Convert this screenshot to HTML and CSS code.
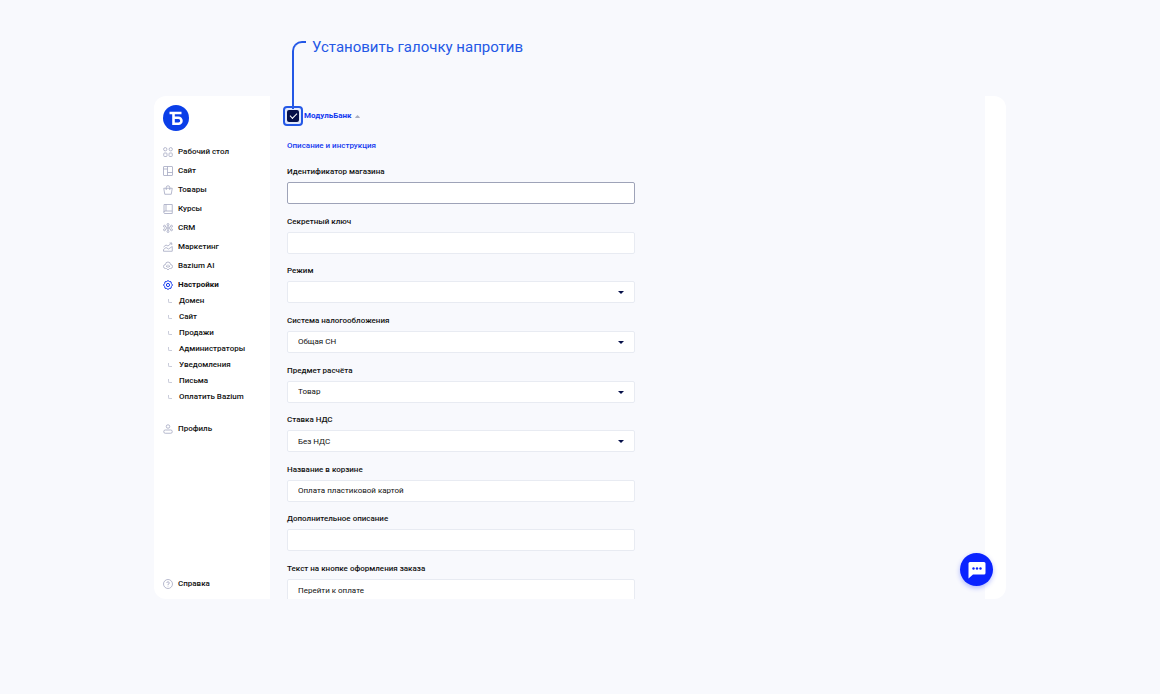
FILE: index.html
```html
<!DOCTYPE html>
<html lang="ru">
<head>
    <meta charset="UTF-8">
    <meta name="viewport" content="width=device-width, initial-scale=1.0">
    <title>Bazium</title>
    <link rel="stylesheet" href="styles.css">
</head>
<body>
    <div class="page">
        <p class="callout">Установить галочку напротив</p>

        <div class="window">
            <aside class="sidebar">
                <a href="#" class="logo" aria-label="Bazium">
                    <svg viewBox="0 0 26 26">
                        <circle cx="13" cy="13" r="13" fill="#0a3ee8"/>
                        <path d="M6.500 8H18.500M10.500 8V18.700H15.500A2.900 2.900 0 0 0 15.500 12.800H10.500" fill="none" stroke="#fff" stroke-width="2.600"/>
                    </svg>
                </a>
                <nav class="menu">
                    <a href="#">
                        <svg viewBox="0 0 20 20"><circle cx="4.500" cy="4.500" r="3.300"/><circle cx="15.500" cy="4.500" r="3.300"/><rect x="1.500" y="12" width="6.500" height="7" rx="1.500"/><rect x="12" y="12" width="6.500" height="7" rx="1.500"/></svg>
                        Рабочий стол
                    </a>
                    <a href="#">
                        <svg viewBox="0 0 20 20"><rect x="1" y="1" width="18" height="18" rx="1"/><path d="M9 1V19M1 6H9M9 13H19"/></svg>
                        Сайт
                    </a>
                    <a href="#">
                        <svg viewBox="0 0 20 20"><path d="M1.500 6.500H18.500L16.500 18.500H3.500ZM6.500 10V5A3.500 3.500 0 0 1 13.500 5V10"/></svg>
                        Товары
                    </a>
                    <a href="#">
                        <svg viewBox="0 0 20 20"><path d="M2 16V1H18.500V19H4A2 2 0 0 1 4 14H18.500M6 1V14"/></svg>
                        Курсы
                    </a>
                    <a href="#">
                        <svg viewBox="0 0 20 20"><circle cx="10" cy="10" r="2"/><circle cx="10" cy="3" r="2"/><circle cx="10" cy="17" r="2"/><circle cx="3" cy="6.500" r="2"/><circle cx="17" cy="6.500" r="2"/><circle cx="3" cy="13.500" r="2"/><circle cx="17" cy="13.500" r="2"/><path d="M10 5V8M10 12V15M5 7.500L8 9M15 7.500L12 9M5 12.500L8 11M15 12.500L12 11"/></svg>
                        CRM
                    </a>
                    <a href="#">
                        <svg viewBox="0 0 20 20"><path d="M1 10L6 6L10 8L17 2M13 2H17.500V6M1 18.500V15L6 11L11 14L18.500 9V18.500Z"/></svg>
                        Маркетинг
                    </a>
                    <a href="#">
                        <svg viewBox="0 0 20 20"><path d="M5 7A5 5 0 0 1 15 7A4 4 0 0 1 15 15H13L10 18L7 15H5A4 4 0 0 1 5 7Z"/><path d="M7 9V12M10 7V14M13 9V12"/></svg>
                        Bazium AI
                    </a>
                    <a href="#" class="active">
                        <svg viewBox="0 0 20 20"><path d="M10 1L12.500 3L16 3.500L16.800 7L19 10L16.800 13L16 16.500L12.500 17L10 19L7.500 17L4 16.500L3.200 13L1 10L3.200 7L4 3.500L7.500 3Z"/><circle cx="10" cy="10" r="3.200"/></svg>
                        Настройки
                    </a>
                </nav>
                <nav class="submenu">
                    <a href="#">Домен</a>
                    <a href="#">Сайт</a>
                    <a href="#">Продажи</a>
                    <a href="#">Администраторы</a>
                    <a href="#">Уведомления</a>
                    <a href="#">Письма</a>
                    <a href="#">Оплатить Bazium</a>
                </nav>
                <nav class="menu profile">
                    <a href="#">
                        <svg viewBox="0 0 20 20"><circle cx="10" cy="5" r="3.500"/><rect x="1.500" y="12" width="17" height="6.500" rx="3"/></svg>
                        Профиль
                    </a>
                </nav>
                <nav class="menu help">
                    <a href="#">
                        <svg viewBox="0 0 20 20"><circle cx="10" cy="10" r="9"/><path d="M7.500 8A2.500 2.500 0 1 1 10 10.500V12M10 13.500V15"/></svg>
                        Справка
                    </a>
                </nav>
            </aside>

            <main class="content">
                <div class="bank">
                    <span class="check-frame">
                        <input type="checkbox" id="bank" checked>
                    </span>
                    <label for="bank">МодульБанк</label>
                    <svg class="caret" viewBox="0 0 6 4"><path d="M0 4V3L3 0L6 3V4Z"/></svg>
                </div>
                <a href="#" class="manual">Описание и инструкция</a>

                <form class="settings">
                    <div class="field">
                        <label for="shop">Идентификатор магазина</label>
                        <input type="text" id="shop" class="current">
                    </div>
                    <div class="field">
                        <label for="secret">Секретный ключ</label>
                        <input type="text" id="secret">
                    </div>
                    <div class="field">
                        <label for="mode">Режим</label>
                        <div class="select">
                            <select id="mode"><option></option></select>
                        </div>
                    </div>
                    <div class="field">
                        <label for="tax">Система налогообложения</label>
                        <div class="select">
                            <select id="tax"><option>Общая СН</option></select>
                        </div>
                    </div>
                    <div class="field">
                        <label for="subject">Предмет расчёта</label>
                        <div class="select">
                            <select id="subject"><option>Товар</option></select>
                        </div>
                    </div>
                    <div class="field">
                        <label for="vat">Ставка НДС</label>
                        <div class="select">
                            <select id="vat"><option>Без НДС</option></select>
                        </div>
                    </div>
                    <div class="field">
                        <label for="name">Название в корзине</label>
                        <input type="text" id="name" value="Оплата пластиковой картой">
                    </div>
                    <div class="field">
                        <label for="about">Дополнительное описание</label>
                        <input type="text" id="about">
                    </div>
                    <div class="field">
                        <label for="button-text">Текст на кнопке оформления заказа</label>
                        <input type="text" id="button-text" value="Перейти к оплате">
                    </div>
                </form>
            </main>

            <div class="edge"></div>

            <button type="button" class="chat" aria-label="Чат">
                <svg viewBox="0 0 18 18">
                    <path d="M2 1H16A1.500 1.500 0 0 1 17.500 2.500V12A1.500 1.500 0 0 1 16 13.500H5L.5 17.500V2.500A1.500 1.500 0 0 1 2 1Z" fill="#fff"/>
                    <circle cx="5.500" cy="7.500" r="1.200"/><circle cx="9" cy="7.500" r="1.200"/><circle cx="12.500" cy="7.500" r="1.200"/>
                </svg>
            </button>
        </div>
    </div>
</body>
</html>
```
FILE: styles.css
```css
* {
    margin: 0;
    padding: 0;
    box-sizing: border-box;
    font-family: "Roboto", "Liberation Sans", sans-serif;
}

body {
    background: #f8f9fd;
    color: #111;
    font-size: 8px;
    line-height: 12px;
}

a {
    color: inherit;
    text-decoration: none;
}

.page {
    max-width: 884px;
    margin: 0 auto;
    padding: 36px 16px 0;
}

/* note with a line that leads down to the checkbox */
.callout {
    position: relative;
    height: 60px;
    padding-left: 158px;
    font-size: 15px;
    line-height: 22px;
    color: #2458e6;
}

.callout::before {
    content: "";
    position: absolute;
    z-index: 1;
    left: 138px;
    top: 5px;
    width: 12px;
    height: 66px;
    border-left: 2px solid #2458e6;
    border-top: 2px solid #2458e6;
    border-top-left-radius: 10px;
}

.window {
    position: relative;
    display: flex;
    height: calc(100vh - 191px);
    border-radius: 12px;
    overflow: hidden;
}

.sidebar {
    display: flex;
    flex-direction: column;
    width: 116px;
    padding: 9px 9px 6px;
    background: #fff;
    font-weight: 500;
}

.logo svg {
    display: block;
    width: 26px;
    height: 26px;
    margin-bottom: 11px;
}

.menu a {
    display: flex;
    align-items: center;
    gap: 5px;
    height: 19px;
}

.menu svg {
    width: 10px;
    height: 10px;
    fill: none;
    stroke: #a4a8c2;
    stroke-width: 1.6;
}

.menu .active {
    font-weight: 700;
}

.menu .active svg {
    stroke: #1238f0;
    stroke-width: 2;
}

.submenu {
    margin-top: -1px;
}

.submenu a {
    display: flex;
    align-items: center;
    gap: 7px;
    height: 16px;
    padding-left: 5px;
}

.submenu a::before {
    content: "";
    width: 3px;
    height: 3px;
    border-left: 1px solid #c9ccda;
    border-bottom: 1px solid #c9ccda;
    border-bottom-left-radius: 2px;
}

.profile {
    margin-top: 14px;
}

.help {
    margin-top: auto;
}

.content {
    flex: 1;
    padding: 10px 16px 0 17px;
}

.bank {
    display: flex;
    align-items: center;
    height: 20px;
    margin-left: -4px;
    color: #1238f0;
    font-weight: 700;
}

.check-frame {
    display: flex;
    align-items: center;
    justify-content: center;
    width: 20px;
    height: 20px;
    margin-right: 1px;
    border: 2px solid #2458e6;
    border-radius: 4px;
    background: #e3eafc;
}

.check-frame input {
    display: flex;
    align-items: center;
    justify-content: center;
    width: 12px;
    height: 12px;
    appearance: none;
    border-radius: 2px;
    background: #06104a;
}

.check-frame input:checked::before {
    content: "";
    width: 6px;
    height: 3px;
    margin-bottom: 2px;
    border-left: 1px solid #fff;
    border-bottom: 1px solid #fff;
    transform: rotate(-45deg);
}

.caret {
    width: 5px;
    height: 3px;
    margin-left: 4px;
    fill: #a9adbf;
}

.manual {
    display: block;
    width: max-content;
    margin-top: 14px;
    color: #1238f0;
    font-weight: 500;
}

/* the last field runs past the bottom of the window */
.settings {
    display: flex;
    flex-direction: column;
    justify-content: space-between;
    max-width: 348px;
    height: 435px;
    margin-top: 14px;
}

.field label {
    display: block;
    margin-bottom: 4px;
    font-weight: 500;
}

.field input,
.field select {
    display: block;
    width: 100%;
    height: 22px;
    padding: 0 10px;
    appearance: none;
    border: 1px solid #e8ebf2;
    border-radius: 2px;
    outline: none;
    background: #fff;
    color: #111;
    font-size: 8px;
}

.field .current {
    border-color: #9ea3b8;
}

.select {
    position: relative;
}

.select::after {
    content: "";
    position: absolute;
    right: 11px;
    top: 10px;
    border: 3px solid transparent;
    border-top-color: #06104a;
    border-bottom: none;
    pointer-events: none;
}

.edge {
    width: 21px;
    background: #fff;
}

.chat {
    position: absolute;
    right: 13px;
    bottom: 13px;
    display: flex;
    align-items: center;
    justify-content: center;
    width: 33px;
    height: 33px;
    border: none;
    border-radius: 50%;
    background: #0a23ff;
    box-shadow: 0 2px 5px rgba(10, 35, 255, 0.3);
    cursor: pointer;
}

.chat svg {
    width: 18px;
    height: 18px;
    fill: #0a23ff;
}
```
